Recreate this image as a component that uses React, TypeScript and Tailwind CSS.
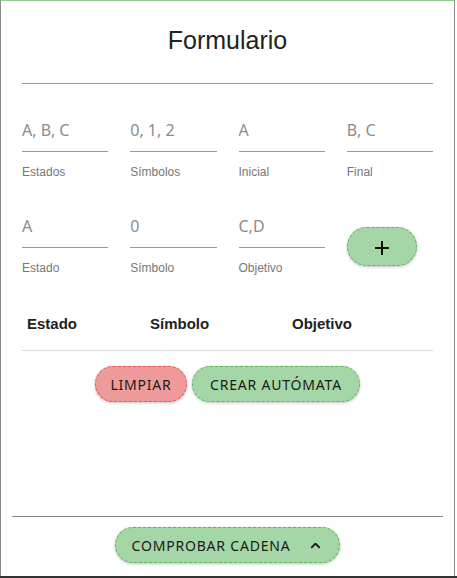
import React from "react"
import { ChevronUp } from "lucide-react"

const fields1 = [
	{ placeholder: "A, B, C", label: "Estados" },
	{ placeholder: "0, 1, 2", label: "Símbolos" },
	{ placeholder: "A", label: "Inicial" },
	{ placeholder: "B, C", label: "Final" }
]

const fields2 = [
	{ placeholder: "A", label: "Estado" },
	{ placeholder: "0", label: "Símbolo" },
	{ placeholder: "C,D", label: "Objetivo" }
]

function Field({ placeholder, label }: { placeholder: string; label: string }) {
	return (
		<div className="flex flex-col">
			<input
				placeholder={placeholder}
				className="h-[33px] w-full border-b border-[#9a9a9a] bg-transparent pb-[11px] text-[16px] leading-[22px] text-[#333] outline-none placeholder:text-[#8c8c8c] [font-family:'Noto_Sans',sans-serif]"
			/>
			<span className="mt-[12px] text-[12px] leading-[16px] text-[#777] [font-family:'Liberation_Sans',Arial,sans-serif]">
				{label}
			</span>
		</div>
	)
}

const btn =
	"flex h-[36px] items-center justify-center rounded-full border border-dashed text-[14px] tracking-[0.8px] text-[#1a1a1a] shadow-[0_1px_3px_rgba(0,0,0,0.25)] [font-family:'Noto_Sans',sans-serif]"

export default function App() {
	return (
		<div className="flex h-[578px] w-[457px] flex-col bg-white">
			<div className="flex h-[576px] w-[455px] flex-col border-x border-t border-[#8a8a8a] border-t-[#8fc98f]">
				{/* Title */}
				<h1 className="pt-[24px] text-center text-[25px] leading-[30px] text-[#222] [font-family:'Liberation_Sans',Arial,sans-serif]">
					Formulario
				</h1>

				<div className="px-[21px]">
					<div className="mt-[28px] h-px bg-[#9a9a9a]" />

					{/* Automaton fields */}
					<div className="mt-[35px] grid grid-cols-4 gap-x-[22px]">
						{fields1.map((f) => (
							<Field key={f.label} {...f} />
						))}
					</div>

					{/* Transition fields */}
					<div className="mt-[35px] grid grid-cols-4 gap-x-[22px]">
						{fields2.map((f) => (
							<Field key={f.label} {...f} />
						))}
						<div>
							<button
								type="button"
								className={`${btn} mt-[12px] h-[39px] w-[70px] border-[#5cb85c] bg-[#a5d6a7]`}
							>
								<svg width="14" height="14" viewBox="0 0 14 14" className="mt-[3px]">
									<path d="M7 0v14M0 7h14" stroke="#111" strokeWidth="2" />
								</svg>
							</button>
						</div>
					</div>

					{/* Transitions table */}
					<div className="mt-[38px] grid grid-cols-[123px_142px_1fr] border-b border-[#dddddd] pb-[16px] pl-[5px] text-[15px] font-bold leading-[20px] text-[#222] [font-family:'Liberation_Sans',Arial,sans-serif]">
						<span>Estado</span>
						<span>Símbolo</span>
						<span>Objetivo</span>
					</div>

					<div className="mt-[15px] flex justify-center gap-[5px]">
						<button type="button" className={`${btn} w-[92px] border-[#f05454] bg-[#ef9a9a]`}>
							LIMPIAR
						</button>
						<button type="button" className={`${btn} w-[168px] border-[#5cb85c] bg-[#a5d6a7]`}>
							CREAR AUTÓMATA
						</button>
					</div>
				</div>

				{/* Footer */}
				<div className="mx-[11px] mt-auto flex justify-center border-t border-[#8a8a8a] pb-[13px] pt-[10px]">
					<button
						type="button"
						className={`${btn} w-[225px] gap-[18px] border-[#5cb85c] bg-[#a5d6a7]`}
					>
						COMPROBAR CADENA
						<ChevronUp className="h-[15px] w-[15px]" strokeWidth={3} />
					</button>
				</div>
			</div>
			<div className="h-[2px] w-full bg-[#333]" />
		</div>
	)
}
